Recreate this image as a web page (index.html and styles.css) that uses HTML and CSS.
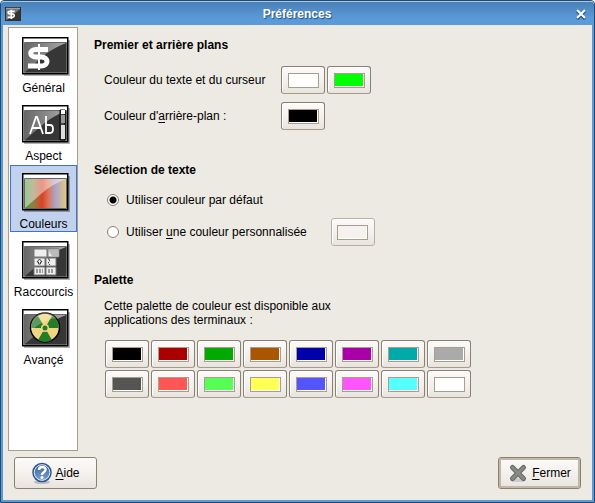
FILE: index.html
```html
<!DOCTYPE html>
<html lang="fr">
<head>
<meta charset="utf-8">
<title>Préférences</title>
<link rel="stylesheet" href="styles.css">
</head>
<body>
<div class="window">
  <header class="titlebar">
    <svg class="app-icon" width="16" height="14" viewBox="0 0 48 42" aria-hidden="true"><rect x="1" y="1" width="46" height="40" fill="#777" stroke="#222" stroke-width="3"/><path d="M46 5V40H5Z" fill="#333"/><path d="M3 4H45" stroke="#aaa" stroke-width="3"/><path d="M29 13H15C7 13 8 21 15 21H22C30 21 29 31 22 31H8M19 8V36" fill="none" stroke="#fff" stroke-width="5"/></svg>
    <h1>Préférences</h1>
    <button class="close" aria-label="Fermer la fenêtre"><svg width="12" height="12" viewBox="0 0 12 12"><path d="M2 3L10 11M10 3L2 11" stroke="#234e7c" stroke-width="3"/><path d="M2 2L10 10M10 2L2 10" stroke="#fff" stroke-width="2"/></svg></button>
  </header>
  <div class="body">
    <nav class="sidebar">
      <button class="tab">
        <svg width="52" height="40" viewBox="-4 0 52 40" aria-hidden="true">
          <defs>
            <linearGradient id="gloss" x1="0" y1="0" x2="1" y2="0"><stop offset="0" stop-color="#686868"/><stop offset="1" stop-color="#a8a8a8"/></linearGradient>
            <linearGradient id="rainbow" x1="0" y1="0" x2="1" y2="0"><stop offset="0" stop-color="#4c9a43"/><stop offset=".2" stop-color="#8c8146"/><stop offset=".42" stop-color="#dc4125"/><stop offset=".58" stop-color="#d8795f"/><stop offset=".75" stop-color="#aaa5d0"/><stop offset="1" stop-color="#e4c979"/></linearGradient>
            <g id="frame"><path d="M2 3H48V39H2Z" fill="#000" opacity=".3"/><rect x="0.750" y="0.750" width="45" height="36" fill="#fff" stroke="#000" stroke-width="1.500"/><rect x="3" y="6" width="41" height="29" fill="#363636"/><path d="M3 6H44C24 14 20 21 3 35Z" fill="url(#gloss)"/><path d="M2.500 5.500H44.500V35.500H2.500Z" fill="none" stroke="#666"/></g>
          </defs>
          <use href="#frame"/><path d="M26 12.500H14C7 12.500 7 20 14 20H19C27 20 27 29 19 29H6" fill="none" stroke="#fff" stroke-width="5"/><path d="M17 7V33" stroke="#fff" stroke-width="2"/>
        </svg><span>Général</span>
      </button>
      <button class="tab">
        <svg width="52" height="40" viewBox="-4 0 52 40" aria-hidden="true"><use href="#frame"/><path d="M8 29L14 12H15L21 29M10.500 23H18.500M24 11V29M24 20H28C32 20 32 28 28 28H24" fill="none" stroke="#fff" stroke-width="1.800"/><path d="M38 5H43V35H38Z" fill="#444" stroke="#000"/><path d="M39 5H43V9H39Z" fill="#fff"/><path d="M39 10H43V18H39Z" fill="#999"/><path d="M39 20H43V34H39Z" fill="#ddd"/></svg><span>Aspect</span>
      </button>
      <button class="tab selected" aria-current="page">
        <svg width="52" height="40" viewBox="-4 0 52 40" aria-hidden="true"><use href="#frame"/><rect x="3" y="6" width="41" height="29" fill="url(#rainbow)"/><path d="M3 6H44C24 14 20 21 3 35Z" fill="#fff" opacity=".45"/></svg><span>Couleurs</span>
      </button>
      <button class="tab">
        <svg width="52" height="40" viewBox="-4 0 52 40" aria-hidden="true"><use href="#frame"/><path d="M12 8H25V16H12ZM26 8H37V16H26ZM12 17H23V25H12ZM24 17H34V25H24ZM12 26H23V34H12ZM24 26H34V34H24Z" fill="#eee" stroke="#777"/><path d="M26 9H36V15H30Z" fill="#bbb"/><path d="M17.500 18L20 21H18.500V23H16.500V21H15Z" fill="none" stroke="#444"/><path d="M28 18H26L28 20L26 22L28 24M14 29H21M14 31H21M26 29H32M26 31H32" fill="none" stroke="#444" stroke-dasharray="2 1"/></svg><span>Raccourcis</span>
      </button>
      <button class="tab">
        <svg width="52" height="40" viewBox="-4 0 52 40" aria-hidden="true"><use href="#frame"/><circle cx="23" cy="18.500" r="14.500" fill="#f1d681" stroke="#000" stroke-width="1.500"/><g fill="#247b28"><path d="M23 19L16 7A14 14 0 0 0 9 19Z"/><path d="M23 19L30 7A14 14 0 0 1 37 19Z"/><path d="M23 19L16 31A14 14 0 0 0 30 31Z"/></g><circle cx="23" cy="19" r="4" fill="#f1d681"/><circle cx="23" cy="19" r="2.500" fill="#247b28"/><path d="M9 19A14 14 0 0 1 34 9Q20 11 9 22Z" fill="#fff" opacity=".25"/></svg><span>Avançé</span>
      </button>
    </nav>
    <main class="page">
      <section class="planes">
        <h2>Premier et arrière plans</h2>
        <div class="fields">
          <span id="fg">Couleur du texte et du curseur</span>
          <div class="pair"><button class="color white" aria-labelledby="fg"><i></i></button><button class="color lime" aria-labelledby="fg"><i></i></button></div>
          <span id="bg">Couleur d'<u>a</u>rrière-plan :</span>
          <div class="pair"><button class="color black" aria-labelledby="bg"><i></i></button></div>
        </div>
      </section>
      <section class="selection">
        <h2>Sélection de texte</h2>
        <div class="option"><input type="radio" name="selection" id="default" checked><label for="default">Utiliser couleur par défaut</label></div>
        <div class="option"><input type="radio" name="selection" id="custom"><label for="custom">Utiliser <u>u</u>ne couleur personnalisée</label><button class="color none" disabled aria-label="Couleur personnalisée"><i></i></button></div>
      </section>
      <section>
        <h2>Palette</h2>
        <p>Cette palette de couleur est disponible aux<br>applications des terminaux :</p>
        <div class="palette">
          <button class="color black" aria-label="Noir"><i></i></button>
          <button class="color red" aria-label="Rouge"><i></i></button>
          <button class="color green" aria-label="Vert"><i></i></button>
          <button class="color brown" aria-label="Brun"><i></i></button>
          <button class="color blue" aria-label="Bleu"><i></i></button>
          <button class="color magenta" aria-label="Magenta"><i></i></button>
          <button class="color cyan" aria-label="Cyan"><i></i></button>
          <button class="color gray" aria-label="Gris"><i></i></button>
          <button class="color dark" aria-label="Gris foncé"><i></i></button>
          <button class="color light-red" aria-label="Rouge clair"><i></i></button>
          <button class="color light-green" aria-label="Vert clair"><i></i></button>
          <button class="color yellow" aria-label="Jaune"><i></i></button>
          <button class="color light-blue" aria-label="Bleu clair"><i></i></button>
          <button class="color pink" aria-label="Rose"><i></i></button>
          <button class="color light-cyan" aria-label="Cyan clair"><i></i></button>
          <button class="color white" aria-label="Blanc"><i></i></button>
        </div>
      </section>
    </main>
  </div>
  <footer class="actions">
    <button class="action"><svg width="22" height="22" viewBox="0 0 22 22" aria-hidden="true"><defs><linearGradient id="help" x1="0" y1="0" x2="0" y2="1"><stop offset="0" stop-color="#315b99"/><stop offset="1" stop-color="#85a7d5"/></linearGradient></defs><ellipse cx="11" cy="20" rx="8" ry="2" fill="#bbb"/><circle cx="11" cy="10.500" r="9" fill="url(#help)" stroke="#2b538e" stroke-width="1.500"/><circle cx="11" cy="10.500" r="7.800" fill="none" stroke="#dce7f6"/><path d="M8 8C8 4 15 4 14.500 8C14 10.500 11 10 11 13" fill="none" stroke="#fff" stroke-width="2.500"/><circle cx="11" cy="15.500" r="1.500" fill="#fff"/></svg><span><u>A</u>ide</span></button>
    <button class="action default"><svg width="20" height="20" viewBox="0 0 20 20" aria-hidden="true"><ellipse cx="10" cy="17" rx="8" ry="2" fill="#ccc"/><path d="M4.500 4.500L15.500 15.500M15.500 4.500L4.500 15.500" stroke="#666864" stroke-width="5" stroke-linecap="round"/><path d="M4.500 4.500L15.500 15.500M15.500 4.500L4.500 15.500" stroke="#888a85" stroke-width="3" stroke-linecap="round"/></svg><span><u>F</u>ermer</span></button>
  </footer>
</div>
</body>
</html>
```
FILE: styles.css
```css
* { box-sizing: border-box; }

body {
  margin: 0;
  background: #fff;
  color: #000;
  font: 12px/14px "Liberation Sans", Arial, sans-serif;
}

button { font: inherit; color: inherit; padding: 0; }
h1, h2, p { margin: 0; font-size: 12px; line-height: 14px; }
u { text-underline-offset: 2px; }

.window {
  display: flex;
  flex-direction: column;
  min-height: 100vh;
  border: 1px solid #214a73;
  border-radius: 4px 4px 0 0;
  background: #edeae3;
  box-shadow: inset 2px 0 #5a9ad8, inset -2px 0 #5a9ad8, inset 0 -2px #5a9ad8;
}

.titlebar {
  display: grid;
  grid-template-columns: 16px 1fr 16px;
  align-items: center;
  height: 24px;
  padding: 0 5px 0 4px;
  border-top: 1px solid #a9c8e6;
  border-radius: 3px 3px 0 0;
  background: linear-gradient(#4a80b7, #5a9ad8 70%);
}

.titlebar h1 {
  color: #fff;
  text-align: center;
  text-shadow: 1px 1px 1px #234e7c;
}

.app-icon { display: block; }
.close { display: grid; place-items: center; height: 16px; border: 0; background: none; }

.body { display: flex; flex: 1; padding: 2px 7px 0; }

.sidebar {
  width: 70px;
  padding: 1px 0 1px 1px;
  border: 1px solid #a89e8c;
  background: #fff;
}

.tab {
  display: flex;
  flex-direction: column;
  align-items: center;
  gap: 4px;
  width: 100%;
  height: 67px;
  margin-bottom: 1px;
  padding-top: 7px;
  border: 1px solid transparent;
  background: none;
  white-space: nowrap;
}

.tab svg { flex: none; }
.tab.selected { border-color: #3d74ca; background: #c2d2ee; }

.page { flex: 1; padding: 11px 16px 0; }
.planes { margin-bottom: 33px; }

.fields {
  display: grid;
  grid-template-columns: 177px 1fr;
  row-gap: 8px;
  align-items: center;
  margin: 14px 0 0 10px;
}

.pair { display: flex; gap: 2px; }

.color {
  display: grid;
  place-items: center;
  width: 44px;
  height: 28px;
  border: 1px solid #8b8172;
  border-bottom-color: #a59b89;
  border-radius: 3px;
  background: linear-gradient(#fcfbfa, #f2efeb 60%, #e8e3de);
  box-shadow: inset 1px 1px #fff;
}

.color i {
  width: 31px;
  height: 15px;
  border: 1px solid #aa9d8c;
  background: currentColor;
  box-shadow: inset -1px -1px #fff;
}

.color:disabled { border-color: #b9afa0; }

.black { color: #000; }
.white { color: #fff; }
.lime { color: #0f0; }
.none { color: #f5f2f0; }
.red { color: #a00; }
.green { color: #0a0; }
.brown { color: #a50; }
.blue { color: #00a; }
.magenta { color: #a0a; }
.cyan { color: #0aa; }
.gray { color: #aaa; }
.dark { color: #555; }
.light-red { color: #f55; }
.light-green { color: #5f5; }
.yellow { color: #ff5; }
.light-blue { color: #55f; }
.pink { color: #f5f; }
.light-cyan { color: #5ff; }

.selection { margin-bottom: 27px; }
.selection h2 { margin-bottom: 9px; }
.option { display: flex; align-items: center; height: 28px; margin: 0 0 4px 13px; }
.option:last-child { margin-bottom: 0; }
.option label { margin-left: 7px; }
.option .color { margin-left: 24px; }

.option input {
  appearance: none;
  width: 12px;
  height: 12px;
  margin: 0;
  border: 1px solid #8b8172;
  border-radius: 50%;
  background: #fff;
}

.option input:checked { background: radial-gradient(circle, #000 3px, #fff 4px); }

.page p { margin: 12px 0 13px 10px; }

.palette {
  display: grid;
  grid-template-columns: repeat(8, 44px);
  gap: 2px;
  margin-left: 11px;
}

.actions { display: flex; justify-content: space-between; padding: 6px 13px 13px; }

.action {
  display: flex;
  align-items: center;
  justify-content: center;
  gap: 2px;
  width: 83px;
  height: 32px;
  border: 1px solid #8b8172;
  border-radius: 3px;
  background: linear-gradient(#fcfbfa, #f2efeb 60%, #e8e3de);
}

.action.default {
  gap: 4px;
  box-shadow: inset 0 0 0 2px #c3b8a8;
}
```
